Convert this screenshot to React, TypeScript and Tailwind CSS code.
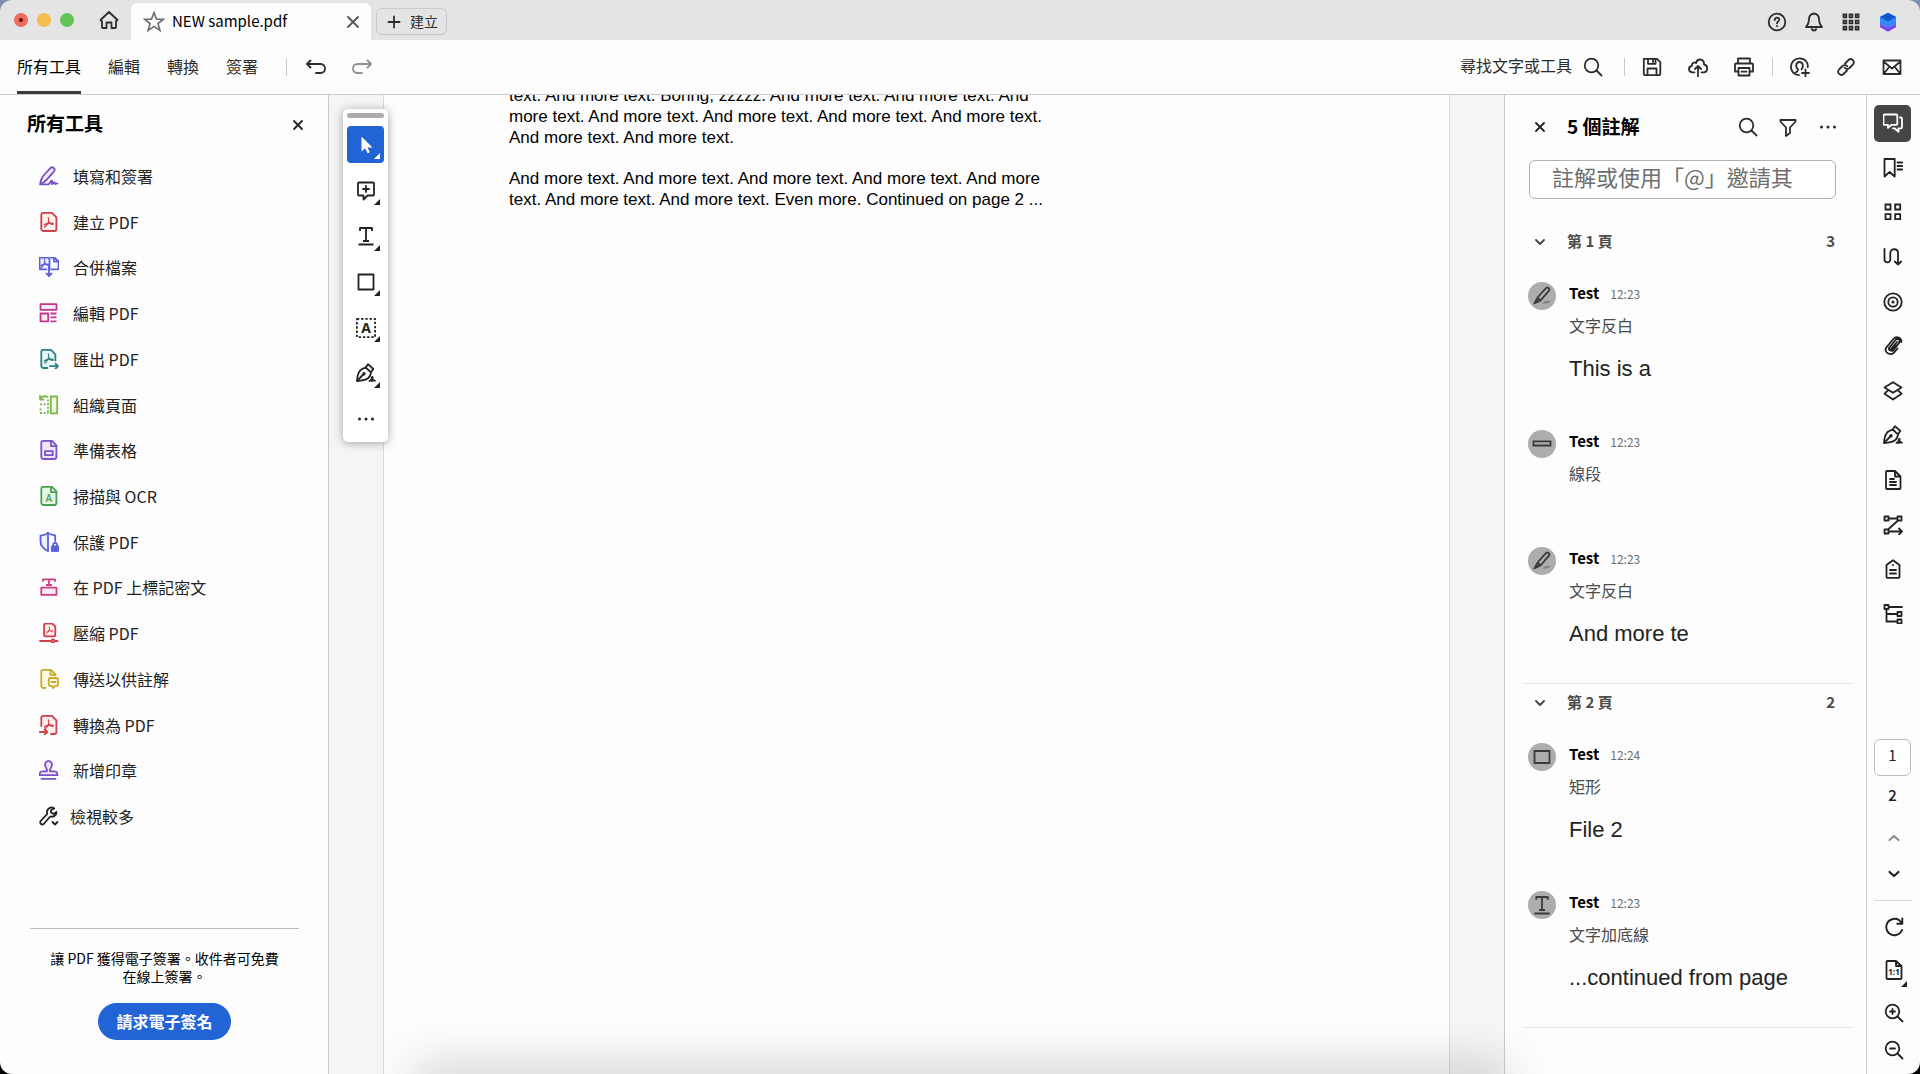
import React from 'react';

interface IconProps {
  children: React.ReactNode;
  className?: string;
}

// Shared 20x20 outline icon frame
const Icon: React.FC<IconProps> = ({ children, className = 'w-5 h-5' }) => (
  <svg
    viewBox="0 0 20 20"
    fill="none"
    stroke="currentColor"
    strokeWidth="1.8"
    strokeLinecap="round"
    strokeLinejoin="round"
    className={`${className} shrink-0`}
    aria-hidden="true"
  >
    {children}
  </svg>
);

const AcrobatMark: React.FC<{ x?: number; y?: number }> = ({ x = 0, y = 0 }) => (
  <path
    transform={`translate(${x} ${y})`}
    strokeWidth="1.2"
    d="M9.3 5.800c.8 2.300.4 4.200-.600 5.800-.9 1.500-2 2.800-3 3.600M8.800 11.200c-1 .5-2.500 1-3.500 1.800M9.600 9.200c.6 1.500 1.700 2.500 3 3.100.8.300 1.300.300 1.700-.100M8.700 11.600c1.600-.5 3.500-.800 5.300-.300"
  />
);

const CloseIcon = () => (
  <Icon className="w-5 h-5">
    <path d="m6 6 8 8M14 6l-8 8" />
  </Icon>
);

const SearchIcon = () => (
  <Icon>
    <circle cx="8.5" cy="8.5" r="6.800" />
    <path d="m13.500 13.500 5 5" />
  </Icon>
);

const MoreIcon = () => (
  <Icon>
    <g fill="currentColor" stroke="none">
      <circle cx="3.500" cy="10" r="1.500" />
      <circle cx="10" cy="10" r="1.500" />
      <circle cx="16.500" cy="10" r="1.500" />
    </g>
  </Icon>
);

const SignPenIcon = () => (
  <Icon>
    <path d="M1 18c.2-4.500 1.300-8.500 3.300-10.700C5.800 6 7.500 5.200 9.700 4.500l5.300 4.800c-.2 2.500-1.200 4.700-3 6-2.500 1.700-6 2.500-11 2.700Z" />
    <path d="M9.700 4.500 12 1.200l5.300 4.800-2.300 3.300M1.300 17.700 7.300 11.500" />
    <circle cx="8" cy="10.800" r=".8" />
    <path d="M13.500 18c2.500-1.500 3.400-3.300 3-4-.6-.6-1.300 2.600-.9 3.800.3.800 1.100-1.100 1.800-.9.400.2.2 1 1.600.7" />
  </Icon>
);

const HighlightIcon = () => (
  <Icon>
    <path d="m5.500 11.500 8.500-9.300c1-1 2-.8 2.800 0 .8.800.800 1.800 0 2.700l-8.300 9.600Z" />
    <path d="m4.500 12.500-2.800 5.500 5.800-2.500Z" fill="currentColor" strokeWidth="1" />
    <path d="M10.500 17.500c1.500-2.500 5-3 8-2.500-1 2-4.500 2.800-8 2.500Z" fill="currentColor" stroke="none" opacity=".4" />
  </Icon>
);

const UnderlineTextIcon = () => (
  <Icon>
    <path strokeLinecap="butt" d="M4.300 4.700V2h11.400v2.700M10 2v13M7 15h6M2.300 18.500h15.400" />
  </Icon>
);

const tools = [
  {
    label: '填寫和簽署',
    color: 'text-[#7a52c7]',
    icon: (
      <>
        <path d="M1.200 18.300c.3-3 1.200-5.800 2.500-7.800l7.600-8.300c1-1 2.600-1.100 3.500-.2 1 .9.900 2.500 0 3.600l-7.300 8.200c-1.600 1.900-3.700 3.300-6.300 4.500Z" fill="#f1ebfc" />
        <path d="M1.200 18.300h8.500c1.500-1.500 2.500-4.300 3.500-3.600 1 .8-1.500 3-.2 3.300 1.200.2 1.700-2 2.600-1.600.7.400-.3 1.600.7 1.600.8 0 1.200-.9 2.200-.5" />
      </>
    ),
  },
  {
    label: '建立 PDF',
    color: 'text-[#cf3f4c]',
    icon: (
      <>
        <path d="M4.200.900h8.800l4.400 4.400v11.800c0 1.100-.8 1.900-1.900 1.900H4.200c-1.100 0-1.900-.8-1.900-1.900V2.800c0-1.100.800-1.900 1.900-1.900Z" fill="#fdefec" />
        <AcrobatMark />
      </>
    ),
  },
  {
    label: '合併檔案',
    color: 'text-[#5d60d6]',
    icon: (
      <>
        <path d="M7.500 12.300H1.500c-.6 0-1-.4-1-1V1.500c0-.6.400-1 1-1H9l1.500 1.800V12.300" fill="#eeeffc" />
        <path d="M12.300 12.300h6.200c.6 0 1-.4 1-1V4.500L15.500.5H11.500" />
        <path d="M15 .7v4h4.500M10 10v9M7.500 16.500 10 19l2.500-2.500" />
        <AcrobatMark x={-4} y={-4} />
      </>
    ),
  },
  {
    label: '編輯 PDF',
    color: 'text-[#c0378b]',
    icon: (
      <>
        <path d="M1.500 1.200h16v5.600h-16zM1.500 10.500h7.700v7.800H1.500z" fill="#fceaf5" />
        <path strokeLinecap="butt" d="M11.500 10.500h6M11.500 14.400h6M11.500 18.300h6" />
      </>
    ),
  },
  {
    label: '匯出 PDF',
    color: 'text-[#2d8080]',
    icon: (
      <>
        <path d="M8.500 19H4.200c-1.100 0-1.900-.8-1.900-1.900V2.800c0-1.100.800-1.900 1.900-1.900H12l4.400 4.400v6.200" fill="#e9f6f6" />
        <path d="M11 17.200h8M16.500 14.700l2.500 2.500-2.500 2.500" />
        <AcrobatMark y={-1} />
      </>
    ),
  },
  {
    label: '組織頁面',
    color: 'text-[#79b848]',
    icon: (
      <>
        <path d="M11.800 1.500h6.400v16.800h-6.400z" fill="#effae6" />
        <path d="M1 3.800C2.500 1.500 5.500.800 8.500 1.800M1 1v3.500h3.500" />
        <path strokeLinecap="butt" strokeDasharray="2 1.600" d="M1 9.300h8.500M1 18h8.500M1.500 13.500v4M9 4.500v13" />
      </>
    ),
  },
  {
    label: '準備表格',
    color: 'text-[#7a52c7]',
    icon: (
      <>
        <path d="M4.200.900h8.800l4.400 4.400v11.800c0 1.100-.8 1.900-1.900 1.900H4.200c-1.100 0-1.900-.8-1.900-1.900V2.800c0-1.100.800-1.900 1.900-1.900Z" fill="#eee6fb" />
        <path d="M12 1v5.200h5.400M6 11.200h7.700v4H6z" />
      </>
    ),
  },
  {
    label: '掃描與 OCR',
    color: 'text-[#4b9f54]',
    icon: (
      <>
        <path d="M4.200.900h8.800l4.400 4.400v11.800c0 1.100-.8 1.900-1.900 1.900H4.200c-1.100 0-1.900-.8-1.900-1.900V2.800c0-1.100.800-1.900 1.900-1.900Z" fill="#e6f7e6" />
        <path d="M12 1v5.200h5.400" />
        <text x="9.800" y="15.500" textAnchor="middle" fontSize="10" fill="currentColor" stroke="none" className="font-['Open_Sans',sans-serif] font-semibold">A</text>
      </>
    ),
  },
  {
    label: '保護 PDF',
    color: 'text-[#5d60d6]',
    icon: (
      <>
        <path d="M9 .900c2 1.500 4.200 2.300 7.200 2.600V9M9 .900C7 2.500 4.500 3.300 1.500 3.600v6c0 4.500 3 7.500 7.500 9.400" fill="#eeeffc" />
        <path d="M9 1v18" />
        <path d="M12.800 14h6.700v5.400h-6.700z" fill="currentColor" strokeWidth="1" />
        <path d="M14.200 13.500v-1c0-2.200 3.800-2.200 3.800 0v1" />
      </>
    ),
  },
  {
    label: '在 PDF 上標記密文',
    color: 'text-[#d33b83]',
    icon: (
      <>
        <path d="M2.300 10.700h15.200v7.200H2.300z" fill="#fdeaf4" />
        <path strokeLinecap="butt" d="M4 4.700V2.300h12v2.400M10 2.300v6M7 8h6" />
      </>
    ),
  },
  {
    label: '壓縮 PDF',
    color: 'text-[#cf3f4c]',
    icon: (
      <>
        <path d="M6.700.5h6.600l3 3v8.200c0 1-.6 1.600-1.600 1.600h-8c-1 0-1.600-.6-1.600-1.600V2.100c0-1 .6-1.600 1.600-1.600Z" fill="#fdefec" />
        <g transform="translate(3.200 -.6) scale(.75)">
          <AcrobatMark />
        </g>
        <path d="M1 18h11M16 18h2.500" />
        <circle cx="14" cy="18" r="1.500" />
      </>
    ),
  },
  {
    label: '傳送以供註解',
    color: 'text-[#cfa92b]',
    icon: (
      <>
        <path d="M6.500 19H4.200c-1.100 0-1.900-.8-1.900-1.900V2.800c0-1.100.800-1.900 1.900-1.900H12l4.400 4.400v1" fill="#fdf8e3" />
        <path d="M11.500 1v4.800h5" />
        <path d="M11.500 9h5.800c1 0 1.700.7 1.700 1.700v4.500c0 1-.7 1.700-1.700 1.700h-1l-2.300 2.300-1-2.300h-1.500c-1 0-1.700-.7-1.700-1.700v-4.500c0-1 .7-1.700 1.700-1.700ZM12.500 13h4" fill="#fdf8e3" />
      </>
    ),
  },
  {
    label: '轉換為 PDF',
    color: 'text-[#cf3f4c]',
    icon: (
      <>
        <path d="M2.300 11V2.800c0-1.100.800-1.900 1.900-1.900H13l4.400 4.400v11.800c0 1.100-.8 1.900-1.900 1.900H12" fill="#fdefec" />
        <path d="M.800 17h7.500M5.800 14.500 8.300 17l-2.500 2.500" />
        <AcrobatMark y={-1} />
      </>
    ),
  },
  {
    label: '新增印章',
    color: 'text-[#7a52c7]',
    icon: (
      <>
        <path d="M8 11.300c.3-1.500-.2-2.500-1-3.600C5 4.500 6.500.900 9.500.900s4.500 3.600 2.500 6.800c-.8 1.100-1.300 2.100-1 3.600h4.500c2 0 3 1.200 3 3.900H.500c0-2.700 1-3.900 3-3.900Z" fill="#eee6fb" />
        <path d="M2.500 18.800h14" />
      </>
    ),
  },
];

const paletteTools = [
  {
    label: '選取工具',
    icon: <path d="M5.500 1.500v15l3.600-3.200 2.500 5 2.300-1.100-2.400-4.800h5Z" fill="currentColor" stroke="none" />,
  },
  {
    label: '新增註解',
    icon: <path d="M3 1.500h14c.6 0 1 .4 1 1v11c0 .6-.4 1-1 1h-5.500L7.500 18.500v-4H3c-.6 0-1-.4-1-1v-11c0-.6.4-1 1-1ZM10 5v6M7 8h6" />,
  },
  {
    label: '文字加底線',
    icon: <path strokeLinecap="butt" d="M4 5V2h12v3M10 2v13M7 15h6M2.500 18.500h15" />,
  },
  { label: '矩形', icon: <path d="M2.500 2.500h15v15h-15z" /> },
  {
    label: '新增文字方塊',
    icon: (
      <>
        <path strokeDasharray="2.400 1.800" strokeLinecap="butt" d="M.9.900h18.200v18.200H.9z" />
        <text x="10" y="15" textAnchor="middle" fontSize="14" fill="currentColor" stroke="none" className="font-['Open_Sans',sans-serif] font-bold">A</text>
      </>
    ),
  },
];

const railTools = [
  {
    label: '書籤',
    icon: <path d="M1.500 1h10.200v17.500L6.600 14l-5.100 4.500ZM14.500 4.500h4.700M14.500 8h4.700M14.500 11.500h4.700" />,
  },
  {
    label: '頁面縮圖',
    icon: <path strokeLinejoin="miter" d="M2.500 2.500h5v5h-5zM12.200 2.500h5v5h-5zM2.500 12.200h5v5h-5zM12.200 12.200h5v5h-5z" />,
  },
  {
    label: '閱讀順序',
    icon: <path d="M1.500 2v10.500c0 3.800 5.800 3.800 5.800 0V6c0-5 7.700-5 7.700 0v11M11.800 14.500l3.200 3 3.200-3" />,
  },
  {
    label: '內容',
    icon: (
      <>
        <circle cx="10" cy="10" r="8.700" />
        <circle cx="10" cy="10" r="4.700" />
        <circle cx="10" cy="10" r=".7" fill="currentColor" />
      </>
    ),
  },
  {
    label: '附件',
    icon: <path d="m14 6-6 7.200c-1.200 1.500-3 .2-1.900-1.300L12.500 4c2-2.300 5.300.2 3.600 2.700M14.500 12.500l-3.700 4.300C7.500 20 .500 16.500 3.300 11.500L10.500 2.800c2.500-3 8.500-1.300 7.800 3.200M8 13.200c-.2.300 6.500-3 8.300-6.500l-5.800 7.300c-2 2-5 .2-4.400-2.100" />,
  },
  {
    label: '圖層',
    icon: <path d="m10 1.200 8.500 5.300-8.500 5.300-8.500-5.300ZM4.800 9.500l-3.300 3.200L10 18.500l8.500-5.800-3.300-3.200" />,
  },
  { label: '簽名', icon: null },
  {
    label: '內容頁',
    icon: <path d="M4 1h8l5.500 5.500V18c0 .5-.5 1-1 1H4c-.5 0-1-.5-1-1V2c0-.5.5-1 1-1ZM12 1v5.500h5.500M7 9h4M7 12h6M7 15h6" />,
  },
  {
    label: '順序',
    icon: <path d="M1.500 1.500h4v4h-4zM14.500 1.500h4v4h-4zM1.500 14.500h4v4h-4zM5.500 3.500h9M15 5.500l-10 9M5.500 16.500H19M16 13.500l3 3-3 3" />,
  },
  {
    label: '標記',
    icon: <path d="M10 1.200 16.500 6v12c0 .5-.4.800-.8.800H4.300c-.4 0-.8-.3-.8-.8V6ZM10 6v.2M7 11h6M7 14.500h6" />,
  },
  {
    label: '模型樹',
    icon: <path d="M1.500 1h4v4h-4zM14.500 8h4v4h-4zM14.500 15.500h4v4h-4zM5.500 3H19M3.500 5v12.500h11M3.500 10h11" />,
  },
];

const sections = [
  {
    title: '第 1 頁',
    count: 3,
    comments: [
      { kind: 'highlight', time: '12:23', type: '文字反白', body: 'This is a' },
      { kind: 'line', time: '12:23', type: '線段', body: '' },
      { kind: 'highlight', time: '12:23', type: '文字反白', body: 'And more te' },
    ],
  },
  {
    title: '第 2 頁',
    count: 2,
    comments: [
      { kind: 'rectangle', time: '12:24', type: '矩形', body: 'File 2' },
      { kind: 'underline', time: '12:23', type: '文字加底線', body: '...continued from page' },
    ],
  },
];

const CommentKindIcon: React.FC<{ kind: string }> = ({ kind }) => {
  if (kind === 'highlight') return <HighlightIcon />;
  if (kind === 'underline') return <UnderlineTextIcon />;
  return (
    <Icon>
      {kind === 'line' ? (
        <path strokeLinejoin="miter" d="M1.500 7.300h17v4.200h-17z" />
      ) : (
        <path strokeLinejoin="miter" d="M2.500 4h15v12h-15z" />
      )}
    </Icon>
  );
};

const Corner = () => (
  <svg viewBox="0 0 6 6" className="absolute right-1 bottom-1 w-1.5 h-1.5" fill="currentColor" aria-hidden="true">
    <path d="M6 0v6H0Z" />
  </svg>
);

const TitleBar = () => (
  <header className="flex h-10 shrink-0 bg-[#e4e4e4]">
    <div className="flex items-center gap-[9px] pl-3.5 w-[131px]">
      <span className="w-3.5 h-3.5 rounded-full bg-[#ed6a5f] flex items-center justify-center">
        <span className="w-1 h-1 rounded-full bg-[#5c0d08]" />
      </span>
      <span className="w-3.5 h-3.5 rounded-full bg-[#f4bd50]" />
      <span className="w-3.5 h-3.5 rounded-full bg-[#61c455]" />
      <button aria-label="首頁" className="ml-4 text-[#2c2c2c]">
        <Icon>
          <path d="M1.500 10 10 2l8.500 8-1.500 1.200V17c0 .6-.4 1-1 1h-3.500v-5.500h-5V18H4c-.6 0-1-.4-1-1v-5.800Z" />
        </Icon>
      </button>
    </div>
    <div className="mt-[3px] w-60 flex items-center pl-3 pr-2 bg-[#fdfdfd] rounded-t-md">
      <Icon className="w-[22px] h-[22px] text-[#6e6e6e]">
        <path strokeWidth="1.500" strokeLinejoin="miter" d="m10 1.500 2.300 6h6.200l-4.900 3.900 1.800 6.300L10 14l-5.400 3.700 1.800-6.300-4.900-3.900h6.200Z" />
      </Icon>
      <span className="ml-[7px] flex-1 text-[15px] text-black">NEW sample.pdf</span>
      <button aria-label="關閉分頁" className="text-[#5a5a5a]">
        <Icon>
          <path strokeWidth="1.900" d="m5 5 10 10M15 5 5 15" />
        </Icon>
      </button>
    </div>
    <button className="mt-2 ml-[5px] h-[27px] w-[71px] flex items-center gap-1.5 pl-[7px] border border-[#c9c9c9] rounded-md text-sm text-[#2c2c2c]">
      <Icon>
        <path d="M10 4.500v11M4.500 10h11" />
      </Icon>
      <span className="pb-0.5">建立</span>
    </button>
    <div className="ml-auto flex items-center gap-[17px] pr-[22px] pt-[3px] text-[#2c2c2c]">
      <button aria-label="說明">
        <Icon>
          <circle cx="10" cy="10" r="8.300" />
          <path d="M7.700 8c0-3.200 4.800-2.800 4.600-.2C12.200 9.300 10 9.500 10 11.300M10 14v.2" />
        </Icon>
      </button>
      <button aria-label="通知">
        <Icon>
          <path d="M10 1.500c-3.500.5-5 3-5 6 0 3.500-1 5.300-3 7.500h16c-2-2.200-3-4-3-7.500 0-3-1.500-5.500-5-6Z" />
          <path d="M7.800 17c.5 2 3.900 2 4.400 0" />
        </Icon>
      </button>
      <button aria-label="應用程式">
        <Icon>
          <path strokeLinejoin="miter" d="M2.500 2.500h2.800v2.800H2.500zM8.600 2.500h2.800v2.800H8.600zM14.700 2.500h2.800v2.800h-2.800zM2.500 8.600h2.800v2.800H2.500zM8.600 8.600h2.800v2.800H8.600zM14.700 8.600h2.800v2.800h-2.800zM2.500 14.700h2.800v2.800H2.500zM8.600 14.700h2.800v2.800H8.600zM14.700 14.700h2.800v2.800h-2.800z" />
        </Icon>
      </button>
      <button aria-label="帳戶">
        <svg viewBox="0 0 20 20" className="w-5 h-5" aria-hidden="true">
          <path d="m10 .8 8 4.200v10L10 19.500 2 15V5Z" fill="#2f8cf5" />
          <path d="m2 13 8 3 8-3v2l-8 4.500L2 15Z" fill="#8a35e8" />
          <path d="m2 10 8 4 8-4v3l-8 3.800L2 13Z" fill="#5b73f2" />
          <path d="m10 .8 8 4.200-8 4.500L2 5Z" fill="#1257cf" />
        </svg>
      </button>
    </div>
  </header>
);

const Divider = () => <span className="h-[18px] w-px bg-[#c9c9c9]" />;

const iconButton = 'w-[46px] h-full flex items-center justify-center';

const Toolbar = () => (
  <div className="flex h-[55px] shrink-0 items-center bg-[#fdfdfd] border-b border-[#cacaca] text-[#2c2c2c] text-base">
    <nav className="flex h-full gap-[27px] pl-[17px]">
      <a href="#tools" className="flex items-center border-b-[3px] border-[#3c3c3c] pt-px text-black">所有工具</a>
      <a href="#edit" className="flex items-center pb-0.5">編輯</a>
      <a href="#convert" className="flex items-center pb-0.5">轉換</a>
      <a href="#sign" className="flex items-center pb-0.5">簽署</a>
    </nav>
    <div className="flex items-center gap-[19px] pl-7">
      <Divider />
      <button aria-label="復原" className="mr-[7px]">
        <Icon>
          <path d="M4.500 3.500 1 7l3.500 3.500M1 7h13.500c6 0 6 9 0 9H10" />
        </Icon>
      </button>
      <button aria-label="重做" className="text-[#909090]">
        <Icon>
          <path d="M15.500 3.500 19 7l-3.500 3.500M19 7H5.500c-6 0-6 9 0 9H10" />
        </Icon>
      </button>
    </div>
    <div className="ml-auto flex h-full items-center pr-[5px]">
      <button className="flex items-center gap-[11px] mr-[21px]">
        <span className="pb-1">尋找文字或工具</span>
        <SearchIcon />
      </button>
      <Divider />
      <button aria-label="儲存" className={`${iconButton} ml-1`}>
        <Icon>
          <path d="M1.800 1.800H15l3.300 3.300v12c0 .6-.4 1-1 1H2.800c-.6 0-1-.4-1-1ZM6 1.800v5h7.500v-5M5.500 18v-6.500h9V18M11 3.500v1.500" />
        </Icon>
      </button>
      <button aria-label="儲存至雲端" className={iconButton}>
        <Icon>
          <path d="M6.500 15.300H4.500C.200 15.300-.2 9.500 3.800 9c-.2-3 3-4.300 4.300-3C9.500.5 16.500 2 16 7.500c4.500.7 4 7.800-.3 7.800h-2.200M10 19.300V9.500M7 12l3-3 3 3" />
        </Icon>
      </button>
      <button aria-label="列印" className={iconButton}>
        <Icon>
          <path d="M4 6.500V1.500h12v5M4 14.500H1V7.500c0-.6.4-1 1-1h16c.6 0 1 .4 1 1v7h-3M4.500 11h11v7.500h-11zM7.500 14.700h5" />
        </Icon>
      </button>
      <span className="flex justify-center w-2.5"><Divider /></span>
      <button aria-label="邀請" className={iconButton}>
        <Icon>
          <path d="M9 18.200C-2.500 17 -1 1.500 9.500 1.300c6 0 9 5 8.200 8.900M5.300 16c.5-1.500 3-1.500 2.700-3.500-3-2.500-2-7.500 1.500-7.500 3.300 0 4.500 4.300 2 7.300M15.500 12.500v7M12 16h7" />
        </Icon>
      </button>
      <button aria-label="複製連結" className={iconButton}>
        <Icon>
          <path d="M9 6.500 12.500 3c3-2.700 7 1.300 4.500 4.500l-3.500 3.500c-1.500 1.300-3.700 1.200-4.800-.3M11 13.500 7.500 17C4.500 19.700.5 15.700 3 12.500L6.500 9c1.500-1.300 3.700-1.200 4.800.3" />
        </Icon>
      </button>
      <button aria-label="電子郵件" className={iconButton}>
        <Icon>
          <path d="M1.500 3.500h17v13.500h-17zM1.500 4.500l8.500 7 8.500-7M2 16.500l5.500-7M18 16.500l-5.500-7" />
        </Icon>
      </button>
    </div>
  </div>
);

const ToolsPanel = () => (
  <aside className="flex flex-col w-[329px] shrink-0 border-r border-[#cacaca] bg-[#fdfdfd] text-[#222]">
    <div className="flex items-center justify-between h-14 pl-[27px] pr-5">
      <h2 className="text-[19px] font-bold text-black">所有工具</h2>
      <button aria-label="關閉面板" className="pt-1"><CloseIcon /></button>
    </div>
    <ul className="mt-0.5 grid auto-rows-fr h-[686px] shrink-0 text-base">
      {tools.map((tool) => (
        <li key={tool.label} className="flex">
          <button className="flex flex-1 items-center gap-3.5 pl-[39px]">
            <span className={tool.color}>
              <Icon>{tool.icon}</Icon>
            </span>
            {tool.label}
          </button>
        </li>
      ))}
      <li className="flex">
        <button className="flex flex-1 items-center gap-[11px] pl-[39px]">
          <Icon>
            <path d="M12 1.500c-3 .5-4.700 3.300-3.700 6.300L1.700 15c-1.500 2 1 4.500 3 3l6.500-7.500c3.500 1 6.300-1.500 6.300-4.500l-3 2-2.500-1.500.2-2.500 3-1.500c-1-.8-2-1.200-3.200-1Z" />
            <path d="m13.500 16 2.500 2.500 2.500-2.500" />
          </Icon>
          檢視較多
        </button>
      </li>
    </ul>
    <div className="mt-auto ml-[30px] mr-[29px] pb-[34px] border-t border-[#bcbcbc] text-center text-black">
      <p className="mt-5 text-sm leading-[18px]">
        讓 PDF 獲得電子簽署。收件者可免費
        <br />
        在線上簽署。
      </p>
      <button className="mt-[18px] h-[37px] px-[18px] pb-0.5 rounded-full bg-[#2264d6] text-base font-bold text-white">
        請求電子簽名
      </button>
    </div>
  </aside>
);

const DocumentView = () => (
  <main className="relative flex flex-1 justify-center bg-[#f5f5f5] overflow-hidden">
    <div className="flex-1 mx-[54px] bg-[#fdfdfd] border-x border-[#dadada] pl-[125px] overflow-hidden">
      <div className="-mt-2.5 font-['Liberation_Sans',Arial,sans-serif] text-[17px] leading-[21px] text-black whitespace-nowrap">
        <p>
          text. And more text. Boring, zzzzz. And more text. And more text. And
          <br />
          more text. And more text. And more text. And more text. And more text.
          <br />
          And more text. And more text.
        </p>
        <p className="mt-5">
          And more text. And more text. And more text. And more text. And more
          <br />
          text. And more text. And more text. Even more. Continued on page 2 ...
        </p>
      </div>
    </div>

    {/* Floating quick tools */}
    <div className="absolute left-3.5 top-3.5 w-[45px] rounded-[5px] bg-white text-[#222] shadow-[0_1px_10px_rgba(0,0,0,0.35)]">
      <div className="mx-auto mt-1 mb-1 h-[5px] w-[37px] rounded-full bg-[#aeaaaa]" />
      <div className="grid auto-rows-fr h-[320px] justify-items-center items-center">
        {paletteTools.map((tool, index) => (
          <button
            key={tool.label}
            aria-label={tool.label}
            className={`relative w-[37px] h-[37px] flex items-center justify-center rounded ${
              index === 0 ? 'bg-[#2264d6] text-white' : ''
            }`}
          >
            <Icon>{tool.icon}</Icon>
            <Corner />
          </button>
        ))}
        <button aria-label="簽署" className="relative w-[37px] h-[37px] flex items-center justify-center">
          <SignPenIcon />
          <Corner />
        </button>
        <button aria-label="更多工具"><MoreIcon /></button>
      </div>
    </div>
  </main>
);

const CommentsPanel = () => (
  <aside className="flex flex-col w-[363px] shrink-0 border-x border-[#cacaca] bg-[#fdfdfd] text-[#222]">
    <div className="flex items-center h-[62px] pl-[25px] pr-7">
      <button aria-label="關閉註解" className="pt-0.5"><CloseIcon /></button>
      <h2 className="ml-[17px] mr-auto text-[19px] font-bold text-black">5 個註解</h2>
      <div className="flex gap-5 pt-0.5 text-[#2c2c2c]">
        <button aria-label="搜尋註解"><SearchIcon /></button>
        <button aria-label="篩選註解">
          <Icon>
            <path d="M2.500 3h15v1.500l-5.500 6V16L8 19v-8.500l-5.500-6Z" />
          </Icon>
        </button>
        <button aria-label="更多選項"><MoreIcon /></button>
      </div>
    </div>
    <input
      aria-label="新增註解"
      placeholder="註解或使用「@」邀請其"
      className="mt-[3px] ml-6 mr-[30px] h-[39px] px-[22px] pb-2 rounded-md border border-[#b0b0b0] bg-white text-[22px] placeholder:text-[#6e6e6e]"
    />
    <div className="mt-6">
      {sections.map((section) => (
        <section key={section.title} className="ml-[18px] mr-[13px] border-b border-[#e2e2e2]">
          <button className="flex items-center w-full h-[37px] mb-2.5 pl-[7px] pr-[18px] text-[15px] font-bold text-[#4b4b4b]">
            <Icon>
              <path strokeWidth="2" d="m6 8 4 4 4-4" />
            </Icon>
            <span className="ml-[17px] mr-auto">{section.title}</span>
            <span>{section.count}</span>
          </button>
          {section.comments.map((comment) => (
            <article key={comment.kind + comment.body} className="flex min-h-[117px] pt-3 pb-9 pl-[5px]">
              <span className="flex items-center justify-center w-7 h-7 rounded-full bg-[#adadad] text-[#3a3a3a]">
                <CommentKindIcon kind={comment.kind} />
              </span>
              <div className="ml-[13px]">
                <div className="flex items-center gap-[11px] h-[22px]">
                  <span className="text-[15px] font-bold text-black">Test</span>
                  <time className="pt-0.5 text-xs text-[#6e6e6e]">{comment.time}</time>
                </div>
                <div className="mt-2.5 text-base leading-[22px] text-[#4b4b4b]">{comment.type}</div>
                {comment.body && (
                  <p className="mt-5 font-['Liberation_Sans',Arial,sans-serif] text-[22px] leading-[26px]">
                    {comment.body}
                  </p>
                )}
              </div>
            </article>
          ))}
        </section>
      ))}
    </div>
  </aside>
);

const railButton = 'relative w-[37px] h-[37px] flex items-center justify-center';

const RightRail = () => (
  <div className="flex flex-col items-center w-[53px] shrink-0 pr-0.5 bg-[#fdfdfd] text-[#222] text-[15px]">
    <div className="grid auto-rows-fr items-center h-[535px] shrink-0 mt-1.5">
      <button aria-label="註解" className={`${railButton} rounded-[5px] bg-[#464646] text-white`}>
        <Icon>
          <path d="M1.500 1.500h11.800c.6 0 1 .4 1 1v8.300c0 .6-.4 1-1 1H8.500l-3.500 3v-3H1.500c-.6 0-1-.4-1-1V2.500c0-.6.4-1 1-1Z" />
          <path d="M17 4.500h1c.6 0 1 .4 1 1v8.800c0 .6-.4 1-1 1h-2.500v3.500l-4-3.500H10" />
        </Icon>
      </button>
      {railTools.map((tool) => (
        <button key={tool.label} aria-label={tool.label} className={railButton}>
          {tool.icon ? <Icon>{tool.icon}</Icon> : <SignPenIcon />}
        </button>
      ))}
    </div>
    <div className="mt-auto flex flex-col items-center pb-2">
      <input
        aria-label="頁碼"
        defaultValue="1"
        className="w-[37px] h-[37px] pb-1.5 text-center rounded-md border border-[#bcbcbc] bg-white"
      />
      <span className="h-[38px] flex items-center font-medium">2</span>
      <button aria-label="上一頁" className="h-12 flex items-center pl-0.5 text-[#8e8e8e]">
        <Icon>
          <path strokeWidth="2.200" d="m5.500 12 4.500-4 4.500 4" />
        </Icon>
      </button>
      <button aria-label="下一頁" className="h-6 flex items-center pl-0.5">
        <Icon>
          <path strokeWidth="2.200" d="m5.500 8 4.500 4 4.500-4" />
        </Icon>
      </button>
      <span className="mt-3.5 w-[38px] h-px bg-[#d8d8d8]" />
      <button aria-label="旋轉" className="h-[43px] mt-1 pl-0.5 flex items-center">
        <Icon>
          <path strokeWidth="1.900" d="M18 13c-2 5.300-9 7-13.300 3C.5 11.700 2 4.500 7.500 2.500c4-1.500 8 0 10.300 4M18.300 1.500v5.200h-5" />
        </Icon>
      </button>
      <button aria-label="實際大小" className="relative w-[37px] h-[43px] pl-0.5 flex items-center justify-center">
        <Icon>
          <path d="M3.500 1h8.500l5.500 5V18c0 .6-.4 1-1 1h-13c-.6 0-1-.4-1-1V2c0-.6.400-1 1-1ZM12 1v5h5.500" />
          <text x="10" y="15" textAnchor="middle" fontSize="8" fill="currentColor" stroke="none" className="font-['Open_Sans',sans-serif] font-bold">1:1</text>
        </Icon>
        <Corner />
      </button>
      <button aria-label="放大" className="h-[43px] pl-0.5 flex items-center">
        <Icon>
          <circle cx="8.500" cy="8.500" r="6.800" />
          <path d="m13.500 13.500 5 5M8.500 6v5M6 8.500h5" />
        </Icon>
      </button>
      <button aria-label="縮小" className="h-8 pl-0.5 flex items-center">
        <Icon>
          <circle cx="8.500" cy="8.500" r="6.800" />
          <path d="m13.500 13.500 5 5M6 8.500h5" />
        </Icon>
      </button>
    </div>
  </div>
);

const App: React.FC = () => {
  return (
    <div className="h-screen bg-gradient-to-b from-[#7f90ac] to-black">
      <div className="relative flex flex-col h-full rounded-xl overflow-hidden font-['Noto_Sans_CJK_TC','Noto_Sans',sans-serif]">
        <TitleBar />
        <Toolbar />
        <div className="flex flex-1 min-h-0">
          <ToolsPanel />
          <DocumentView />
          <CommentsPanel />
          <RightRail />
        </div>
        {/* Soft shade rising from the dock */}
        <div className="pointer-events-none absolute top-full left-[420px] right-[420px] h-2 shadow-[0_4px_48px_6px_rgba(0,0,0,0.32)]" />
      </div>
    </div>
  );
};

export default App;
